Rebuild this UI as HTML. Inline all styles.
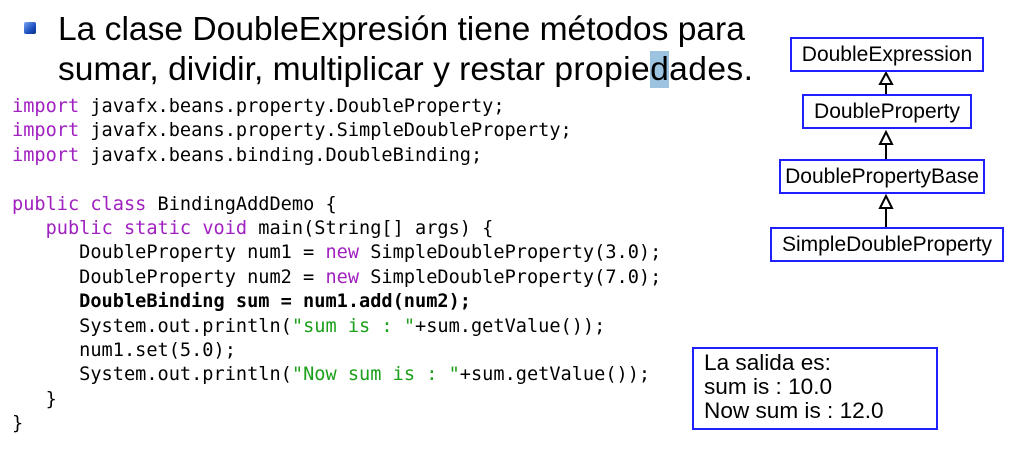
<!DOCTYPE html>
<html><head><meta charset="utf-8"><style>
body{margin:0;width:1009px;height:453px;background:#fff;position:relative;overflow:hidden;font-family:"Liberation Sans",sans-serif;}
.t{position:absolute;left:58px;top:10px;font-size:33.6px;line-height:40px;color:#000;white-space:nowrap;}
.bul{position:absolute;left:24px;top:22px;width:12px;height:12px;background:linear-gradient(135deg,#7aa8f0,#1c4fc0 60%,#0c2f80);border-radius:2px;}
pre{position:absolute;left:12px;top:95px;margin:0;font-family:"DejaVu Sans Mono",monospace;font-size:18.6px;line-height:24.4px;color:#000;}
.k{color:#a020c0}.s{color:#1aa01a}
.b{position:absolute;border:2px solid #2020ff;font-size:21px;text-align:center;line-height:31px;background:#fff;}
.o{position:absolute;left:692px;top:347px;border:2px solid #2020ff;font-size:22.6px;line-height:24px;padding:2px 0 0 10px;box-sizing:border-box;width:246px;height:83px;}
</style></head><body>
<div class="bul"></div>
<div class="t">La clase DoubleExpresión tiene métodos para<br>sumar, dividir, multiplicar y restar <span style="letter-spacing:0.4px">propie<span style="background:#9cc3e0">d</span>ades.</span></div>
<pre><span class="k">import</span> javafx.beans.property.DoubleProperty;
<span class="k">import</span> javafx.beans.property.SimpleDoubleProperty;
<span class="k">import</span> javafx.beans.binding.DoubleBinding;

<span class="k">public class</span> BindingAddDemo {
   <span class="k">public static void</span> main(String[] args) {
      DoubleProperty num1 = <span class="k">new</span> SimpleDoubleProperty(3.0);
      DoubleProperty num2 = <span class="k">new</span> SimpleDoubleProperty(7.0);
      <b>DoubleBinding sum = num1.add(num2);</b>
      System.out.println(<span class="s">"sum is : "</span>+sum.getValue());
      num1.set(5.0);
      System.out.println(<span class="s">"Now sum is : "</span>+sum.getValue());
   }
}</pre>
<svg style="position:absolute;left:0;top:0" width="1009" height="453">
<g stroke="#000" stroke-width="2" fill="#fff">
<line x1="886" y1="80" x2="886" y2="94"/><polygon points="880,84 892,84 886,73"/>
<line x1="886" y1="142" x2="886" y2="159"/><polygon points="880,144 892,144 886,132"/>
<line x1="886" y1="206" x2="886" y2="227"/><polygon points="880,208 892,208 886,196"/>
</g></svg>
<div class="b" style="left:790px;top:37px;width:190px;height:31px">DoubleExpression</div>
<div class="b" style="left:802px;top:94px;width:166px;height:31px">DoubleProperty</div>
<div class="b" style="left:779px;top:159px;width:202px;height:31px">DoublePropertyBase</div>
<div class="b" style="left:770px;top:227px;width:230px;height:31px">SimpleDoubleProperty</div>
<div class="o">La salida es:<br>sum is : 10.0<br>Now sum is : 12.0</div>
</body></html>
